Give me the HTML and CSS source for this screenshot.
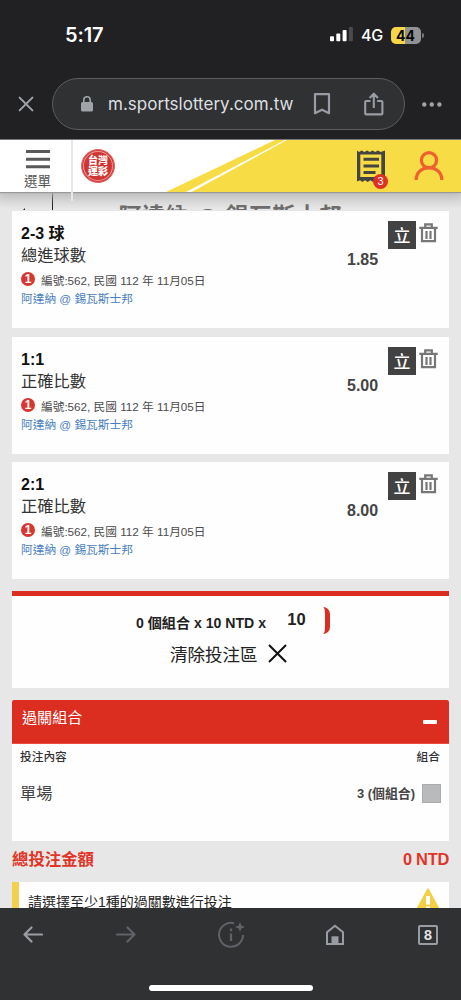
FILE: index.html
```html
<!DOCTYPE html>
<html lang="zh-Hant">
<head>
<meta charset="utf-8">
<title>台灣運彩</title>
<link rel="stylesheet" href="styles.css">
</head>
<body>
<svg class="defs" width="0" height="0">
  <symbol id="trash" viewBox="0 0 19 20">
    <path d="M6.200 4V1.400h6.600V4M0.300 4.900h18.400M3 5v13.100h13V5M7.500 8v8M11.500 8v8" fill="none" stroke="#777" stroke-width="2.200"/>
  </symbol>
</svg>
<div class="status">
  <span class="time">5:17</span>
  <svg class="signal" width="24" height="16" viewBox="0 0 24 16"><rect x="0" y="10.300" width="4" height="5" rx="1" fill="#fff"/><rect x="6.300" y="7.500" width="4" height="7.800" rx="1" fill="#fff"/><rect x="12.600" y="4" width="4" height="11.300" rx="1" fill="#fff"/><rect x="18.900" y="1" width="4" height="14.300" rx="1" fill="#4b4b4d"/></svg>
  <span class="network">4G</span>
  <span class="battery">44</span><i class="battery-tip"></i>
</div>
<div class="browser">
  <svg class="close" width="16" height="16" viewBox="0 0 16 16"><path d="M1.600 1.600l12.800 12.800M14.400 1.600L1.600 14.400" stroke="#a0a4a8" stroke-width="2" stroke-linecap="round"/></svg>
  <div class="address">
    <svg width="12" height="16" viewBox="0 0 12 16"><rect y="6" width="12" height="9.500" rx="1.600" fill="#a0a4a8"/><path d="M2.800 7V4a3.200 3.200 0 016.400 0v3" fill="none" stroke="#a0a4a8" stroke-width="1.600"/></svg>
    <span class="url">m.sportslottery.com.tw</span>
    <svg class="bookmark" width="18" height="22" viewBox="0 0 18 22"><path d="M2 1.200h14v19l-7-3.500-7 3.500z" fill="none" stroke="#999ca4" stroke-width="2.200" stroke-linejoin="round"/></svg>
    <svg class="share" width="20" height="24" viewBox="0 0 20 24"><path d="M6.500 9H2.200q-1 0-1 1v11.400q0 1 1 1h15.200q1 0 1-1V10q0-1-1-1h-4.300M9.800 16V1.800M5.600 6l4.200-4.300L14 6" fill="none" stroke="#999ca4" stroke-width="2.100" stroke-linejoin="round"/></svg>
  </div>
  <svg class="more" width="20" height="5" viewBox="0 0 20 5"><circle cx="2.300" cy="2.500" r="2.200"/><circle cx="9.800" cy="2.500" r="2.200"/><circle cx="17.400" cy="2.500" r="2.200"/></svg>
</div>
<main class="page">
  <header class="site-header">
    <svg class="header-art" width="461" height="52" viewBox="0 0 461 52"><path d="M166 52L275 0h186v52z" fill="#f8dc46"/><path d="M186 52h5.500L287 0h-2z" fill="#fff"/></svg>
    <div class="menu">
      <svg width="24" height="19" viewBox="0 0 24 19"><path d="M0 1.600h24M0 9.200h24M0 16.800h24" stroke="#5a5a5a" stroke-width="3"/></svg>
      <span>選單</span>
    </div>
    <div class="logo">台灣<br>運彩</div>
    <div class="slip">
      <svg width="30" height="33" viewBox="0 0 30 33"><path d="M1 .5l2 1.400L5.700.5l2.700 1.400L11.100.5l2.700 1.400L16.500.5l2.700 1.400L21.900.5l2.700 1.400L29 .5v31l-3.800-1.300-2.700 1.800-2.700-1.800-2.700 1.800-2.700-1.800-2.700 1.800L9 30.200l-2.700 1.800-2.300-1.800-3 1.300z" fill="#444540"/><path d="M4.300 4.500h21v22.500h-21z" fill="#f8dc46"/><path d="M7.500 9.200h15.500M7.500 16h15.500M7.500 22.600h12" stroke="#444540" stroke-width="3"/></svg>
      <b class="count">3</b>
    </div>
    <svg class="user" width="30" height="30" viewBox="0 0 30 30"><circle cx="15" cy="9.300" r="7.600"/><path d="M2.200 29C2.200 12.500 27.800 12.500 27.800 29"/></svg>
  </header>
  <div class="match-strip"><svg class="back" width="10" height="4" viewBox="0 0 10 4"><path d="M2 4L5 1v3z" fill="#222"/></svg><span class="strip-line"></span><span class="match-title">阿達納 @ 錫瓦斯士邦</span></div>
  <section class="bets">
    <article class="bet">
      <div class="info"><h3>2-3 球</h3><h4>總進球數</h4><p class="meta"><b class="one">1</b><span>編號:562, 民國 112 年 11月05日</span></p><a class="teams">阿達納 @ 錫瓦斯士邦</a></div>
      <b class="odds">1.85</b><span class="stand">立</span><svg class="trash"><use href="#trash"/></svg>
    </article>
    <article class="bet">
      <div class="info"><h3>1:1</h3><h4>正確比數</h4><p class="meta"><b class="one">1</b><span>編號:562, 民國 112 年 11月05日</span></p><a class="teams">阿達納 @ 錫瓦斯士邦</a></div>
      <b class="odds">5.00</b><span class="stand">立</span><svg class="trash"><use href="#trash"/></svg>
    </article>
    <article class="bet">
      <div class="info"><h3>2:1</h3><h4>正確比數</h4><p class="meta"><b class="one">1</b><span>編號:562, 民國 112 年 11月05日</span></p><a class="teams">阿達納 @ 錫瓦斯士邦</a></div>
      <b class="odds">8.00</b><span class="stand">立</span><svg class="trash"><use href="#trash"/></svg>
    </article>
  </section>
  <section class="summary">
    <div class="stake"><span class="formula">0 個組合 x 10 NTD x</span><span class="amount">10</span></div>
    <div class="clear"><span>清除投注區</span><svg width="19" height="19" viewBox="0 0 19 19"><path d="M1 1l17 17M18 1L1 18" stroke="#111" stroke-width="2"/></svg></div>
  </section>
  <section class="combos">
    <div class="combos-head"><span>過關組合</span><i class="minus"></i></div>
    <div class="columns"><span>投注內容</span><span>組合</span></div>
    <div class="single"><span class="kind">單場</span><b>3 (個組合)</b><i class="box"></i></div>
  </section>
  <div class="total"><span>總投注金額</span><span class="sum">0 NTD</span></div>
  <div class="alert"><span>請選擇至少1種的過關數進行投注</span><svg width="26" height="24" viewBox="0 0 26 24"><path d="M13 1.500L24.700 23H1.300z" fill="#f3cf45" stroke="#f3cf45" stroke-width="2" stroke-linejoin="round"/><path d="M13 8v8.500M13 18.500v4" stroke="#fff" stroke-width="4"/></svg></div>
</main>
<nav class="toolbar">
  <div class="tools">
    <svg width="20" height="17" viewBox="0 0 20 17"><path d="M19 8.500H1.500M8.500 1.500l-7 7 7 7" fill="none" stroke="#9a9ea3" stroke-width="2.200" stroke-linecap="round" stroke-linejoin="round"/></svg>
    <svg class="forward" width="20" height="17" viewBox="0 0 20 17"><path d="M1 8.500h17.500M11.500 1.500l7 7-7 7" fill="none" stroke="#5f6267" stroke-width="2.200" stroke-linecap="round" stroke-linejoin="round"/></svg>
    <svg class="discover" width="28" height="28" viewBox="0 0 28 28"><path d="M16 2.200A12 12 0 1 0 25 14" fill="none" stroke="#5f6267" stroke-width="2"/><path d="M13 7.500v2.800M13 12.500v7.500" stroke="#5f6267" stroke-width="2.300"/><path d="M22 1l1.400 3.600L27 6l-3.600 1.400L22 11l-1.400-3.600L17 6l3.600-1.400z" fill="#5f6267"/></svg>
    <svg class="home" width="20" height="22" viewBox="0 0 20 22"><path d="M2 20V8.200l8-6.400 8 6.400V20z" fill="none" stroke="#999ca4" stroke-width="2"/><path d="M6.500 12.300h7V20h-7z" fill="#999ca4"/></svg>
    <span class="tabs">8</span>
  </div>
  <i class="home-bar"></i>
</nav>
</body>
</html>
```
FILE: styles.css
```css
* { box-sizing: border-box; }
body { margin: 0; width: 461px; height: 1000px; overflow: hidden; display: flex; flex-direction: column; background: #212123; font-family: "Liberation Sans", "Noto Sans CJK TC", sans-serif; color: #222; }
h3, h4, p { margin: 0; }
svg { display: block; flex: none; }
i { display: block; }
.defs { position: absolute; }

.status { display: flex; align-items: center; height: 70px; padding-left: 65px; flex: none; color: #fff; font-family: Inter, sans-serif; }
.time { width: 265px; font-size: 20px; font-weight: 600; letter-spacing: -.1px; }
.signal { margin-bottom: 2px; }
.network { width: 29.500px; margin-left: 7px; font-size: 16px; font-weight: 500; letter-spacing: -.2px; }
.battery { width: 30px; height: 17px; border-radius: 5px; background: linear-gradient(90deg, #f7d548 45%, #929294 45%); color: #080808; font-size: 14px; font-weight: 700; line-height: 17px; text-align: center; }
.battery-tip { width: 2px; height: 5px; margin-left: 1px; background: #777; border-radius: 0 2px 2px 0; }

.browser { display: flex; height: 69px; padding: 8px 18px 0; align-items: flex-start; flex: none; }
.close { margin: 18px 18px 0 0; }
.address { display: flex; align-items: center; width: 353px; height: 52px; border: 1px solid #5b5d60; border-radius: 26px; background: #303133; padding-left: 28px; }
.url { width: 205px; margin-left: 15px; font-family: Inter, sans-serif; font-size: 17px; color: #dedfe1; letter-spacing: .02px; white-space: nowrap; }
.share { margin-left: 33px; }
.more { margin: 24px 0 0 17px; fill: #a0a4a8; }

.page { flex: none; height: 769px; overflow: hidden; background: #e7e7e7; }
.site-header { position: relative; display: flex; height: 53px; background: #fff; border-top: 1px solid #77787a; box-shadow: 0 1px 1px #999, 0 4px 10px #bbb; z-index: 1; }
.header-art { position: absolute; top: 0; left: 0; }
.menu { position: relative; width: 73px; height: 61px; padding: 10px 0 0 24px; border-right: 2px solid #e8e8e8; flex: none; }
.menu svg { margin-left: 2px; }
.menu span { display: block; margin-top: 2px; font-size: 13.500px; line-height: 19px; color: #555; font-family: "Noto Sans CJK TC", sans-serif; }
.logo { position: relative; width: 34px; height: 34px; margin: 9px 0 0 8px; padding-top: 5px; border-radius: 50%; background: #cf3531; border: 1px solid #dc6c69; box-shadow: inset 0 0 0 1px #cf3531, inset 0 0 0 2px #e99; text-align: center; color: #fff; font: 900 10px/10.500px "Noto Sans CJK TC", sans-serif; }
.slip { position: relative; margin: 10px 0 0 241px; height: 40px; }
.count { position: absolute; left: 17px; top: 24px; width: 15px; height: 15px; border-radius: 50%; background: #df3026; color: #fff; font-size: 11px; font-weight: 400; line-height: 15px; text-align: center; }
.user { position: relative; margin: 11px 0 0 28px; fill: none; stroke: #ef6030; stroke-width: 3.200; }
.match-strip { display: flex; height: 18px; overflow: hidden; padding-left: 20px; background: linear-gradient(#cfcfcf, #e8e8e8); }
.back { margin: 15px 0 0; }
.strip-line { width: 22.500px; border-right: 1px solid #222; }
.match-title { margin: 11px 0 0 66px; font: 700 22.700px/26px "Liberation Sans", "Noto Sans CJK TC", sans-serif; letter-spacing: .7px; color: #6c6c6c; white-space: nowrap; }

.bets { display: grid; gap: 8.300px; padding: 1px 12px 0; }
.bet { display: flex; height: 117.300px; padding: 11px 10px 0 9px; background: #fefefe; }
.info { width: 326px; white-space: nowrap; }
h3 { font-size: 16px; line-height: 24px; height: 22px; color: #111; }
h4 { font-size: 16.300px; line-height: 23px; height: 22px; font-weight: 400; color: #333; }
.meta { display: flex; height: 18px; margin-top: 6px; font-size: 11.700px; line-height: 18px; color: #4c4c4c; }
.one { width: 14px; height: 14px; margin: 0 6px 0 0; border-radius: 50%; background: #d93630; color: #fff; font-size: 12px; line-height: 14px; text-align: center; }
.teams { display: block; font-size: 11.700px; line-height: 18px; color: #4a7fbd; }
.odds { width: 41px; margin-top: 28px; font-size: 16px; line-height: 20px; color: #444; }
.stand { width: 28px; height: 28px; margin: -1px 3px 0 0; background: #424242; color: #fff; font: 500 17px/27px "Noto Sans CJK TC", sans-serif; text-align: center; }
.trash { width: 19px; height: 20px; margin-top: 1px; }

.summary { height: 97px; margin: 12px 12px 0; background: #fefefe; border-top: 5px solid #db2d20; padding: 10px 119px 0 124px; }
.stake { display: flex; height: 30px; }
.formula { width: 138px; font-size: 14.100px; line-height: 34px; font-weight: 700; white-space: nowrap; }
.amount { width: 57px; height: 27px; margin-top: 1px; border-right: 5px solid #db2d20; border-radius: 7px; padding-left: 14px; font-size: 16.500px; line-height: 25px; font-weight: 700; }
.clear { display: flex; align-items: center; gap: 10px; height: 34px; margin-left: 34px; font-size: 17.500px; white-space: nowrap; }

.combos { height: 141px; margin: 12px 12px 0; border-radius: 2px 2px 0 0; background: #fefefe; overflow: hidden; }
.combos-head { display: flex; justify-content: space-between; height: 43.500px; padding: 7px 12px 0 10px; background: #db2d20; border-bottom: 1px solid #ee4b40; color: #fff; font-size: 15.100px; line-height: 22px; }
.minus { width: 14px; height: 4px; border-radius: 1px; background: #fff; margin-top: 13px; }
.columns { display: flex; justify-content: space-between; padding: 2px 9px 0 8px; font: 500 11.700px/20px "Noto Sans CJK TC", sans-serif; color: #333; }
.single { display: flex; align-items: center; margin-top: 15px; padding: 0 8px; height: 25px; color: #444; }
.kind { flex: 1; font-size: 16.200px; line-height: 24px; }
.single b { margin-right: 7px; font-size: 12.900px; padding-bottom: 1px; }
.box { width: 19px; height: 19px; background: #b9babc; border: 1px solid #aaa; }
.total { display: flex; justify-content: space-between; height: 41px; padding: 0 12px; color: #df3528; font-size: 16.400px; line-height: 36px; font-weight: 700; }
.sum { letter-spacing: -.25px; }
.alert { display: flex; justify-content: space-between; height: 40px; margin: 0 12px; padding: 6px 8px 0 9px; border-left: 7px solid #f3d04d; background: #fefefe; font-size: 14px; line-height: 28px; white-space: nowrap; }

.toolbar { position: relative; height: 92px; background: #303133; flex: none; }
.tools { display: flex; align-items: center; height: 53px; padding: 0 23px; }
.forward { margin-left: 73px; }
.discover { margin-left: 82px; }
.home { margin-left: 79px; }
.tabs { width: 20px; height: 20px; margin-left: 73px; border: 2px solid #999ca4; border-radius: 2px; color: #e0e2e5; font: 700 13px/16px Inter, sans-serif; text-align: center; }
.home-bar { width: 164px; height: 6px; margin: 24px auto 0; border-radius: 3px; background: #fff; }
```
